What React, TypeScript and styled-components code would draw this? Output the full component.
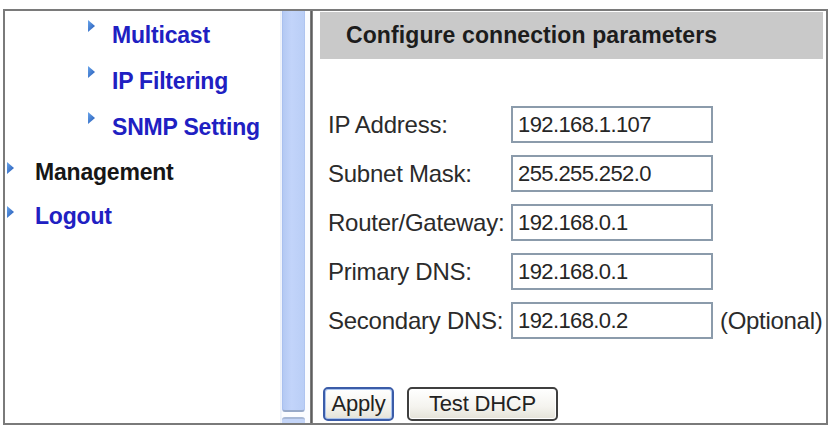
import React from "react";
import styled, { createGlobalStyle } from "styled-components";

const GlobalStyle = createGlobalStyle`
  html, body {
    margin: 0;
    padding: 0;
    background: #ffffff;
  }
  body {
    font-family: "Liberation Sans", Arial, sans-serif;
  }
`;

const Frame = styled.div`
  box-sizing: border-box;
  margin: 9px 0 0 3px;
  width: 825px;
  height: 416px;
  border: 2px solid #7a7a7a;
  display: grid;
  grid-template-columns: 275px 30px 3px 1fr;
  overflow: hidden;
  background: #ffffff;
`;

/* ---------- left navigation ---------- */

const Nav = styled.nav`
  display: flex;
  flex-direction: column;
  padding-top: 1px;
`;

const NavItem = styled.a<{ $sub?: boolean; $dark?: boolean }>`
  display: flex;
  align-items: flex-start;
  height: ${(p) => (p.$sub ? 46 : 44)}px;
  padding-left: ${(p) => (p.$sub ? 83 : 2)}px;
  gap: ${(p) => (p.$sub ? 17 : 21)}px;
  font-size: 23px;
  font-weight: bold;
  line-height: ${(p) => (p.$sub ? 46 : 44)}px;
  letter-spacing: -0.2px;
  color: ${(p) => (p.$dark ? "#161616" : "#2020c2")};
  text-decoration: none;
  cursor: pointer;
  white-space: nowrap;
`;

const ArrowBox = styled.span<{ $sub?: boolean }>`
  display: block;
  width: 7px;
  height: 12px;
  margin-top: ${(p) => (p.$sub ? 8 : 12)}px;
  flex: none;
  line-height: 0;

  svg {
    display: block;
  }
`;

const Arrow: React.FC<{ sub?: boolean; id: string }> = ({ sub, id }) => (
  <ArrowBox $sub={sub}>
    <svg width="7" height="12" viewBox="0 0 7 12">
      <defs>
        <linearGradient id={id} x1="0" y1="0" x2="1" y2="1">
          <stop offset="0" stopColor="#6aa6ec" />
          <stop offset="1" stopColor="#1f55b4" />
        </linearGradient>
      </defs>
      <polygon points="0,0 7,6 0,12" fill={`url(#${id})`} />
    </svg>
  </ArrowBox>
);

/* ---------- scroll bar and divider ---------- */

const ScrollTrack = styled.div`
  display: flex;
  flex-direction: column;
  background: linear-gradient(to right, #f3f6fc 0px, #e6ecf8 1px, #fbfcff 2px);
  padding: 0 5px 0 2px;
`;

const Thumb = styled.div`
  height: 401px;
  flex: none;
  box-sizing: border-box;
  background: linear-gradient(to right, #b4c9f3, #c2d4fa 40%, #bacef6);
  border-left: 1px solid #a9c0ef;
  border-right: 1px solid #b0c5f0;
  border-bottom: 2px solid #98a9c8;
  border-radius: 0 0 3px 3px;
`;

const DownButton = styled.div`
  margin-top: 5px;
  height: 12px;
  flex: none;
  background: #c4d5f8;
  border-top: 2px solid #a8b8d6;
  border-radius: 3px 3px 0 0;
`;

const Divider = styled.div`
  background: linear-gradient(to right, #8a8a8a, #5e5e5e 50%, #9a9a9a);
`;

/* ---------- content pane ---------- */

const Content = styled.section`
  display: flex;
  flex-direction: column;
  padding: 1px 3px 0 7px;
`;

const Header = styled.h2`
  margin: 0;
  height: 47px;
  background: #c9c9c9;
  padding-left: 26px;
  font-size: 23px;
  font-weight: bold;
  line-height: 47px;
  letter-spacing: 0.1px;
  color: #1c1c1c;
  white-space: nowrap;
`;

const Form = styled.form`
  margin: 47px 0 0 8px;
  display: grid;
  grid-template-columns: 176px 202px auto;
  grid-auto-rows: 37px;
  row-gap: 12px;
  column-gap: 7px;
  align-items: center;
`;

const Label = styled.label`
  font-size: 24px;
  letter-spacing: -0.25px;
  color: #2b2b2b;
  white-space: nowrap;
`;

const Field = styled.input`
  box-sizing: border-box;
  width: 202px;
  height: 37px;
  margin: 0;
  border: 2px solid #8b9bab;
  padding: 0 0 0 5px;
  font-family: "Liberation Sans", Arial, sans-serif;
  font-size: 22px;
  letter-spacing: -0.6px;
  color: #262626;
  background: #ffffff;
  outline: none;
`;

const Note = styled.span`
  font-size: 24px;
  color: #2b2b2b;
  white-space: nowrap;
  letter-spacing: -0.3px;
`;

const Actions = styled.div`
  display: flex;
  gap: 13px;
  margin: 48px 0 0 3px;
`;

const Button = styled.button<{ $primary?: boolean }>`
  box-sizing: border-box;
  height: 34px;
  width: ${(p) => (p.$primary ? 71 : 151)}px;
  padding: 0;
  border: 2px solid ${(p) => (p.$primary ? "#3b5ca8" : "#3f3f3f")};
  border-radius: 5px;
  box-shadow: ${(p) =>
    p.$primary ? "inset 0 0 0 1px #a9c3ee" : "inset 0 0 0 1px #ffffff"};
  background: linear-gradient(to bottom, #ffffff, #f4f3ee 60%, #e4e2d8);
  font-family: "Liberation Sans", Arial, sans-serif;
  font-size: 22px;
  letter-spacing: -0.2px;
  color: #222222;
  cursor: pointer;
`;

const fields = [
  { label: "IP Address:", value: "192.168.1.107" },
  { label: "Subnet Mask:", value: "255.255.252.0" },
  { label: "Router/Gateway:", value: "192.168.0.1" },
  { label: "Primary DNS:", value: "192.168.0.1" },
  { label: "Secondary DNS:", value: "192.168.0.2", note: "(Optional)" },
];

export default function App() {
  return (
    <>
      <GlobalStyle />
      <Frame>
        <Nav>
          <NavItem $sub>
            <Arrow sub id="a1" />
            Multicast
          </NavItem>
          <NavItem $sub>
            <Arrow sub id="a2" />
            IP Filtering
          </NavItem>
          <NavItem $sub>
            <Arrow sub id="a3" />
            SNMP Setting
          </NavItem>
          <NavItem $dark>
            <Arrow id="a4" />
            Management
          </NavItem>
          <NavItem>
            <Arrow id="a5" />
            Logout
          </NavItem>
        </Nav>
        <ScrollTrack>
          <Thumb />
          <DownButton />
        </ScrollTrack>
        <Divider />
        <Content>
          <Header>Configure connection parameters</Header>
          <Form onSubmit={(e) => e.preventDefault()}>
            {fields.map((f) => (
              <React.Fragment key={f.label}>
                <Label>{f.label}</Label>
                <Field type="text" defaultValue={f.value} />
                {f.note ? <Note>{f.note}</Note> : <span />}
              </React.Fragment>
            ))}
          </Form>
          <Actions>
            <Button $primary type="button">
              Apply
            </Button>
            <Button type="button">Test DHCP</Button>
          </Actions>
        </Content>
      </Frame>
    </>
  );
}
